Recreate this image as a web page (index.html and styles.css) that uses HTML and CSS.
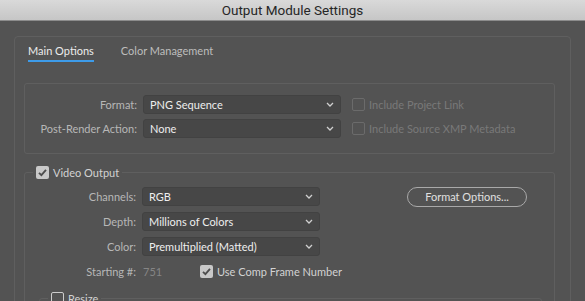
FILE: index.html
```html
<!DOCTYPE html>
<html lang="en">
<head>
  <meta charset="UTF-8">
  <title>Output Module Settings</title>
  <link rel="stylesheet" href="styles.css">
</head>
<body>

<div class="titlebar">Output Module Settings</div>

<div class="panel">
  <!-- Onglets -->
  <div class="tabs">
    <span class="tab active">Main Options</span>
    <span class="tab">Color Management</span>
  </div>

  <!-- Format -->
  <div class="group format-group">
    <label class="field-label">Format:</label>
    <div class="select">PNG Sequence <svg class="chev" width="8" height="5" viewBox="0 0 8 5"><path d="M1 1l3 3 3-3" fill="none" stroke="#d0d0d0" stroke-width="1.3"/></svg></div>
    <div class="check-field disabled"><span class="box"></span>Include Project Link</div>

    <label class="field-label">Post-Render Action:</label>
    <div class="select">None <svg class="chev" width="8" height="5" viewBox="0 0 8 5"><path d="M1 1l3 3 3-3" fill="none" stroke="#d0d0d0" stroke-width="1.3"/></svg></div>
    <div class="check-field disabled"><span class="box"></span>Include Source XMP Metadata</div>
  </div>

  <!-- Video Output -->
  <fieldset class="fs video">
    <legend class="check-field">
      <span class="box checked"><svg width="13" height="13" viewBox="0 0 13 13"><path d="M3 6.8l2.4 2.4 4.6-5.4" fill="none" stroke="#4e4e4e" stroke-width="1.8"/></svg></span>Video Output
    </legend>

    <div class="video-grid">
      <label class="field-label">Channels:</label>
      <div class="select">RGB <svg class="chev" width="8" height="5" viewBox="0 0 8 5"><path d="M1 1l3 3 3-3" fill="none" stroke="#d0d0d0" stroke-width="1.3"/></svg></div>
      <button class="pill">Format Options...</button>

      <label class="field-label">Depth:</label>
      <div class="select">Millions of Colors <svg class="chev" width="8" height="5" viewBox="0 0 8 5"><path d="M1 1l3 3 3-3" fill="none" stroke="#d0d0d0" stroke-width="1.3"/></svg></div>
      <div></div>

      <label class="field-label">Color:</label>
      <div class="select">Premultiplied (Matted) <svg class="chev" width="8" height="5" viewBox="0 0 8 5"><path d="M1 1l3 3 3-3" fill="none" stroke="#d0d0d0" stroke-width="1.3"/></svg></div>
      <div></div>

      <label class="field-label">Starting #:</label>
      <div class="start-row">
        <span class="start-num">751</span>
        <span class="check-field"><span class="box checked"><svg width="13" height="13" viewBox="0 0 13 13"><path d="M3 6.8l2.4 2.4 4.6-5.4" fill="none" stroke="#4e4e4e" stroke-width="1.8"/></svg></span>Use Comp Frame Number</span>
      </div>
      <div></div>
    </div>

    <fieldset class="fs resize">
      <legend class="check-field"><span class="box"></span>Resize</legend>
    </fieldset>
  </fieldset>
</div>

</body>
</html>
```

FILE: styles.css
```css
body {
  margin: 0;
  background: #535353;
  font-family: Lato, "Open Sans", sans-serif;
  font-size: 11px;
  color: #b9b9b9;
  overflow: hidden;
}

.titlebar {
  height: 20px;
  line-height: 20px;
  text-align: center;
  font-family: Roboto, "Liberation Sans", sans-serif;
  font-size: 13.5px;
  color: #262626;
  background: linear-gradient(#d9d9d9, #c6c6c6);
  border-bottom: 1px solid #8c8c8c;
}

.panel {
  margin: 15px 0 0 14px;
  width: 555px;
  height: 300px;
  border: 1px solid #5f5f5f;
  border-radius: 4px;
}

.tabs {
  display: flex;
  gap: 27px;
  padding: 7px 0 0 13px;
}

.tab {
  line-height: 14px;
  padding-bottom: 2px;
  border-bottom: 2px solid transparent;
  color: #bdbdbd;
}

.tab.active {
  color: #ececec;
  border-bottom-color: #3d9be9;
}

.group {
  margin: 21px 0 0 9px;
  width: 531px;
  border: 1px solid #5f5f5f;
  border-radius: 3px;
}

.format-group {
  box-sizing: border-box;
  height: 71px;
  display: grid;
  grid-template-columns: 112px 198px auto;
  grid-auto-rows: 19px;
  column-gap: 6px;
  row-gap: 5px;
  padding-top: 11px;
  align-items: center;
}

.format-group .check-field {
  margin-left: 5px;
}

.field-label {
  text-align: right;
  color: #b7b7b7;
  white-space: nowrap;
}

.select {
  box-sizing: border-box;
  height: 19px;
  display: flex;
  align-items: center;
  justify-content: space-between;
  padding: 0 6px 0 6px;
  background: #474747;
  border: 1px solid #424242;
  border-radius: 3px;
  color: #eeeeee;
}

.check-field {
  display: flex;
  align-items: center;
  gap: 4px;
  height: 16px;
  color: #d2d2d2;
  white-space: nowrap;
}

.check-field.disabled {
  color: #797979;
}

.box {
  box-sizing: border-box;
  flex-shrink: 0;
  width: 13px;
  height: 13px;
  border: 1px solid #cccccc;
  border-radius: 2px;
  display: inline-flex;
}

.disabled .box {
  border-color: #6b6b6b;
}

.box.checked {
  border: none;
  background: #c9c9c9;
}

.fs {
  margin: 0;
  padding: 0;
  border: 1px solid #5f5f5f;
  border-radius: 3px;
}

.video {
  margin: 10px 0 0 9px;
  width: 531px;
  height: 200px;
  box-sizing: border-box;
}

.video > legend {
  margin-left: 8px;
  padding: 0 3px;
}

.video-grid {
  display: grid;
  grid-template-columns: 111px 178px auto;
  grid-auto-rows: 19px;
  column-gap: 6px;
  row-gap: 6px;
  align-items: center;
  padding-top: 7px;
}

.pill {
  justify-self: start;
  margin-left: 81px;
  width: 120px;
  height: 20px;
  border: 1.5px solid #a9a9a9;
  border-radius: 10px;
  background: transparent;
  font-family: inherit;
  font-size: 11px;
  color: #e0e0e0;
  padding: 0;
}

.start-row {
  display: flex;
  align-items: center;
  height: 19px;
}

.start-num {
  flex-shrink: 0;
  width: 57px;
  padding-left: 1px;
  color: #858585;
}

.resize {
  margin: 9px 0 0 14px;
  width: 501px;
  height: 40px;
}

.resize > legend {
  margin-left: 8px;
  padding: 0 3px;
}
```
